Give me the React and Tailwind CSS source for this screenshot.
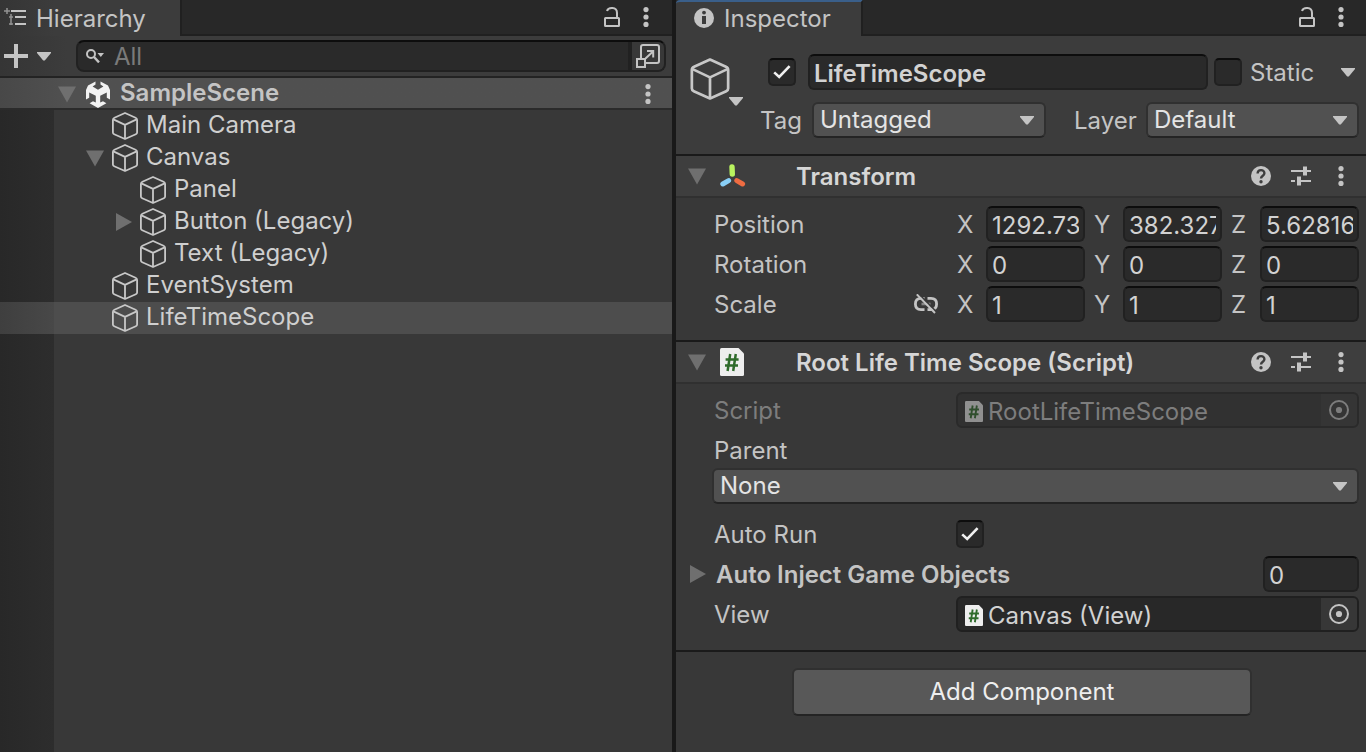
import React from 'react';

const FIELD =
  'h-9 min-w-0 rounded-md border-2 border-[#212121] border-t-[#0d0d0d] bg-[#2a2a2a] px-1 pt-0.5 text-[#d2d2d2] outline-none';

function Cube({ className }) {
  return (
    <svg viewBox="0 0 26 28" className={className} fill="none" stroke="#c8c8c8" strokeWidth="1.8" strokeLinejoin="round">
      <path d="M13 1 L23.6 5.8 Q25.1 6.5 25.1 8 V20.4 Q25.1 21.6 23.8 22.2 L13 27 L2.2 22.2 Q0.9 21.6 0.9 20.4 V8 Q0.9 6.5 2.4 5.8 Z" />
      <path d="M1.4 7.4 L13 12.9 L24.6 7.4 M13 12.9 V27" />
    </svg>
  );
}

function SceneIcon({ className }) {
  return (
    <svg viewBox="0 0 24 27" className={className}>
      <path d="M9.5 0.4 V3.6 L6.6 5.6 L12 8.8 L17.4 5.6 L14.5 3.6 V0.4 L22 4.6 L24 9 V18.4 L20.8 16.8 V11.4 L14.2 14.8 V21.6 L17 20.2 L20.4 22.2 L12 27 L3.6 22.2 L7 20.2 L9.8 21.6 V14.8 L3.2 11.4 V16.8 L0 18.4 V9 L2 4.6 Z" fill="#f2f2f2" />
    </svg>
  );
}

function Triangle({ open, className = '' }) {
  return (
    <svg viewBox="0 0 18 18" className={`h-[18px] w-[18px] shrink-0 ${className}`} fill="#6f6f6f">
      {open ? <path d="M0 1.5 H18 L9 17.5 Z" /> : <path d="M2 0 V18 L18 9 Z" />}
    </svg>
  );
}

function Caret({ className = '' }) {
  return (
    <svg viewBox="0 0 14 9" className={`h-[9px] w-[14px] shrink-0 ${className}`} fill="#c4c4c4">
      <path d="M0 0 H14 V1 L7.8 8.6 H6.2 L0 1 Z" />
    </svg>
  );
}

function Kebab() {
  return (
    <button type="button" aria-label="More options" className="flex h-6 w-6 shrink-0 items-center justify-center">
      <svg viewBox="0 0 6 20" className="h-5 w-[6px]" fill="#c4c4c4">
        <circle cx="3" cy="2.6" r="2.6" />
        <circle cx="3" cy="10" r="2.6" />
        <circle cx="3" cy="17.4" r="2.6" />
      </svg>
    </button>
  );
}

function Lock() {
  return (
    <button type="button" aria-label="Lock" className="flex h-6 w-6 shrink-0 items-center justify-center">
      <svg viewBox="0 0 16 20" className="h-5 w-4" fill="none" stroke="#c4c4c4" strokeWidth="2">
        <rect x="1" y="11" width="14" height="8" rx="0.5" />
        <path d="M3 4 C4.2 0.2 13 -0.6 13 6 V11" />
      </svg>
    </button>
  );
}

function Check({ id, label, checked }) {
  return (
    <span className="grid h-7 w-7 shrink-0 place-items-center">
      <input
        id={id}
        type="checkbox"
        aria-label={label}
        defaultChecked={checked}
        className="peer col-start-1 row-start-1 h-7 w-7 appearance-none rounded-[5px] border-2 border-[#212121] border-t-[#0d0d0d] bg-[#2a2a2a]"
      />
      <svg viewBox="0 0 18 14" className="pointer-events-none col-start-1 row-start-1 hidden h-[14px] w-[18px] peer-checked:block" fill="none" stroke="#f0f0f0" strokeWidth="2.6">
        <path d="M1.2 7.4 L6.2 12 L16.6 1.2" />
      </svg>
    </span>
  );
}

function Dropdown({ id, value, label, className = '' }) {
  return (
    <span className={`grid min-w-0 items-center ${className}`}>
      <select
        id={id}
        aria-label={label}
        className="col-start-1 row-start-1 h-9 w-full appearance-none rounded-md border-2 border-[#303030] border-b-[#242424] bg-[#515151] px-1.5 text-[#e4e4e4] outline-none"
      >
        <option>{value}</option>
      </select>
      <Caret className="pointer-events-none col-start-1 row-start-1 mr-3 justify-self-end" />
    </span>
  );
}

function ScriptIcon({ className }) {
  return (
    <svg viewBox="0 0 24 28" className={className}>
      <path d="M1.5 0 H18.5 L24 5.5 V26.5 Q24 28 22.5 28 H1.5 Q0 28 0 26.5 V1.5 Q0 0 1.5 0 Z" fill="#eeeeee" />
      <path d="M10.2 6 L7.6 23 M15.8 6 L13.2 23 M5.6 11.4 H18.6 M5 17.6 H18" stroke="#2f6b2b" strokeWidth="2.5" fill="none" />
    </svg>
  );
}

function HierarchyItem({ name, child, arrow, selected }) {
  return (
    <li className={`flex h-8 ${selected ? 'bg-[#4d4d4d]' : ''}`}>
      <div className={`w-[54px] shrink-0 bg-linear-to-r ${selected ? 'from-[#3f3f3f] to-[#484848]' : 'from-[#282828] to-[#2d2d2d]'}`} />
      <div className={`flex items-center ${child ? 'pl-[60px]' : 'pl-8'}`}>
        <span className="flex w-[26px] shrink-0">{arrow && <Triangle open={arrow === 'open'} />}</span>
        <Cube className="h-7 w-[26px] shrink-0" />
        <span className="pb-0.5 pl-2">{name}</span>
      </div>
    </li>
  );
}

function Hierarchy() {
  return (
    <section className="flex min-w-0 flex-col bg-[#383838]">
      <div className="flex h-9 bg-[#282828]">
        <div className="flex w-[182px] items-center gap-[9px] border-r-2 border-[#202020] bg-linear-to-r from-[#353535] to-[#3c3c3c] to-30% pt-0.5 pl-1">
          <svg viewBox="0 0 23 18" className="mb-1 h-[18px] w-[23px] shrink-0" stroke="#c4c4c4" strokeWidth="2" fill="none">
            <path d="M7 3 H22 M11 9 H22 M11 16 H22" />
            <path d="M3 0 V6 M0 3 H6 M7 6 V17 M5 9 H9 M5 16 H9" strokeWidth="1.5" opacity="0.65" />
          </svg>
          <h2>Hierarchy</h2>
        </div>
        <div className="flex flex-1 items-center justify-end gap-[10px] border-b-2 border-[#202020] pr-[14px]">
          <Lock />
          <Kebab />
        </div>
      </div>
      <div className="flex h-[42px] items-center border-b-2 border-[#232323] bg-linear-to-r from-[#353535] to-[#3c3c3c] to-10% pr-[6px] pl-1">
        <button type="button" aria-label="Create" className="flex h-6 w-[47px] shrink-0 items-center justify-between">
          <svg viewBox="0 0 24 24" className="h-6 w-6" stroke="#c4c4c4" strokeWidth="4">
            <path d="M12 0 V24 M0 12 H24" />
          </svg>
          <Caret />
        </button>
        <div className="ml-[25px] flex h-8 flex-1 items-center rounded-lg border-2 border-[#212121] border-t-[#0d0d0d] bg-[#2a2a2a]">
          <svg viewBox="0 0 18 14" className="ml-2 h-[14px] w-[18px] shrink-0" fill="none" stroke="#c4c4c4" strokeWidth="2">
            <circle cx="5" cy="5" r="4" />
            <path d="M8 8 L13 13.4" strokeWidth="2.4" />
            <path d="M11.5 4 H18 L14.8 8 Z" fill="#c4c4c4" stroke="none" />
          </svg>
          <input type="text" aria-label="Search hierarchy" placeholder="All" className="h-7 min-w-0 flex-1 bg-transparent px-[10px] pt-0.5 outline-none placeholder:text-[#7a7a7a]" />
          <button type="button" aria-label="Open search window" className="flex h-7 w-9 shrink-0 items-center justify-center rounded-r-md border-l-4 border-[#212121] bg-[#383838]">
            <svg viewBox="0 0 24 24" className="h-6 w-6" fill="none" stroke="#c4c4c4" strokeWidth="2">
              <path d="M5 14 V3 Q5 1 7 1 H21 Q23 1 23 3 V17 Q23 19 21 19 H10" />
              <rect x="1" y="15" width="8" height="8" />
              <path d="M9.5 14.5 L17 7.5 M11 7 H17.2 V13.5" />
            </svg>
          </button>
        </div>
      </div>
      <div className="flex h-8 items-center border-b-2 border-[#2b2b2b] bg-linear-to-r from-[#484848] to-[#505050] to-10% pt-0.5 pr-3 pl-[58px]">
        <Triangle open />
        <SceneIcon className="ml-[10px] h-[27px] w-6 shrink-0" />
        <h3 className="flex-1 pb-0.5 pl-[10px] font-semibold">SampleScene</h3>
        <Kebab />
      </div>
      <ul className="text-[#cfcfcf]">
        <HierarchyItem name="Main Camera" />
        <HierarchyItem name="Canvas" arrow="open" />
        <HierarchyItem name="Panel" child />
        <HierarchyItem name="Button (Legacy)" child arrow="closed" />
        <HierarchyItem name="Text (Legacy)" child />
        <HierarchyItem name="EventSystem" />
        <HierarchyItem name="LifeTimeScope" selected />
      </ul>
      <div className="w-[54px] flex-1 bg-linear-to-r from-[#282828] to-[#2d2d2d]" />
    </section>
  );
}

function ComponentHeader({ icon, title }) {
  return (
    <div className="flex h-11 items-center border-t-2 border-b-2 border-t-[#1a1a1a] border-b-[#303030] bg-[#3e3e3e] pr-[13px] pl-3">
      <Triangle open />
      <span className="ml-3 flex w-[78px] shrink-0 items-center pl-0.5">{icon}</span>
      <h3 className="flex-1 pt-0.5 font-semibold text-[#d6d6d6]">{title}</h3>
      <div className="flex items-center gap-4">
        <button type="button" aria-label="Help" className="flex h-6 w-6 items-center justify-center">
          <svg viewBox="0 0 20 20" className="h-5 w-5">
            <circle cx="10" cy="10" r="10" fill="#c4c4c4" />
            <path d="M6.6 7.6 C6.6 3 13.4 3 13.4 7.2 C13.4 9.8 10 9.6 10 12.6" fill="none" stroke="#3e3e3e" strokeWidth="2.4" />
            <circle cx="10" cy="15.8" r="1.7" fill="#3e3e3e" />
          </svg>
        </button>
        <button type="button" aria-label="Presets" className="flex h-6 w-6 items-center justify-center">
          <svg viewBox="0 0 20 20" className="h-5 w-5" stroke="#c4c4c4" fill="none">
            <path d="M0 5 H12 M16 5 H20 M0 15 H4 M8 15 H20" strokeWidth="2" />
            <path d="M14 0.5 V9.5 M8 10.5 V19.5" strokeWidth="4" />
          </svg>
        </button>
        <Kebab />
      </div>
    </div>
  );
}

function VectorRow({ label, values, linked }) {
  const axes = ['X', 'Y', 'Z'];
  return (
    <div className="flex h-9 items-center pl-[38px]">
      <div className="flex w-[242px] shrink-0 items-center justify-between pr-[18px]">
        <span className="pt-0.5">{label}</span>
        {linked && (
          <button type="button" aria-label="Constrain proportions">
            <svg viewBox="0 0 24 20" className="h-5 w-6" fill="none" stroke="#c4c4c4" strokeWidth="2.8">
              <path d="M10.5 4.4 H7 Q1.4 4.4 1.4 10 Q1.4 15.6 7 15.6 H10.5 M13.5 4.4 H17 Q22.6 4.4 22.6 10 Q22.6 15.6 17 15.6 H13.5" />
              <path d="M7.5 10 H16.5" strokeWidth="2.6" opacity="0.55" />
              <path d="M4.6 -0.4 L22.8 18.2" stroke="#383838" strokeWidth="1.6" />
              <path d="M2.8 0.4 L21 19" strokeWidth="2" />
            </svg>
          </button>
        )}
      </div>
      <div className="grid flex-1 grid-cols-3 gap-2">
        {axes.map((axis, i) => (
          <label key={axis} className="flex items-center">
            <span className="w-[30px] shrink-0 pt-0.5 pl-px">{axis}</span>
            <input type="text" defaultValue={values[i]} aria-label={`${label} ${axis}`} className={`${FIELD} w-full flex-1`} />
          </label>
        ))}
      </div>
    </div>
  );
}

function ObjectField({ label, value, disabled }) {
  return (
    <div className={`flex h-9 items-center pl-[38px] ${disabled ? 'text-[#7d7d7d]' : ''}`}>
      <span className="w-[242px] shrink-0 pt-0.5">{label}</span>
      <div className={`flex h-9 min-w-0 flex-1 items-center rounded-md border-2 pl-[7px] ${disabled ? 'border-[#2a2a2a] bg-[#313131]' : 'border-[#202020] bg-[#282828] text-[#d2d2d2]'}`}>
        <ScriptIcon className={`mt-0.5 h-[21px] w-[18px] shrink-0 ${disabled ? 'opacity-50' : ''}`} />
        <span className="flex-1 pt-1 pl-[5px]">{value}</span>
        <button type="button" disabled={disabled} aria-label={`Select ${label}`} className={`flex h-8 w-9 items-center justify-center rounded-r ${disabled ? 'bg-[#353535]' : 'bg-[#373737] text-[#c4c4c4]'}`}>
          <svg viewBox="0 0 20 20" className="h-5 w-5">
            <circle cx="10" cy="10" r="9" fill="none" stroke="currentColor" strokeWidth="2" />
            <circle cx="10" cy="10" r="3.1" fill="currentColor" />
          </svg>
        </button>
      </div>
    </div>
  );
}

function Inspector() {
  return (
    <section className="flex min-w-0 flex-col bg-[#383838]">
      <div className="flex h-9 bg-[#282828]">
        <div className="flex w-[187px] items-center gap-[10px] rounded-tl-sm border-t-2 border-r-2 border-t-[#3a5f8a] border-r-[#202020] bg-[#3c3c3c] pl-[18px]">
          <svg viewBox="0 0 20 20" className="mb-0.5 h-5 w-5 shrink-0">
            <circle cx="10" cy="10" r="10" fill="#c4c4c4" />
            <circle cx="10" cy="4.6" r="1.9" fill="#3c3c3c" />
            <path d="M8 8 H12 V16 H8 Z" fill="#3c3c3c" />
          </svg>
          <h2>Inspector</h2>
        </div>
        <div className="flex flex-1 items-center justify-end gap-[10px] border-b-2 border-[#202020] pr-[13px]">
          <Lock />
          <Kebab />
        </div>
      </div>

      <div className="flex h-[118px] bg-[#3c3c3c] pt-[18px] pr-[7px] pl-[14px]">
        <button type="button" aria-label="Object icon" className="flex h-[52px] w-[54px] shrink-0 items-end">
          <Cube className="mb-1.5 h-[42px] w-10" />
          <Caret className="-ml-px" />
        </button>
        <div className="flex flex-1 flex-col gap-3">
          <div className="flex items-center pl-6">
            <Check label="Active" checked />
            <input type="text" aria-label="Name" defaultValue="LifeTimeScope" className={`${FIELD} ml-3 flex-1 font-semibold`} />
            <span className="ml-[6px] flex">
              <Check id="static" />
            </span>
            <label htmlFor="static" className="w-[99px] shrink-0 pt-0.5 pl-2">
              Static
            </label>
            <Caret className="mr-1" />
          </div>
          <div className="flex items-center pl-4">
            <label htmlFor="tag" className="w-[52px] shrink-0 pt-0.5">
              Tag
            </label>
            <Dropdown id="tag" value="Untagged" className="flex-[234]" />
            <label htmlFor="layer" className="w-[100px] shrink-0 pt-0.5 pl-7">
              Layer
            </label>
            <Dropdown id="layer" value="Default" className="flex-[213]" />
          </div>
        </div>
      </div>

      <ComponentHeader
        title="Transform"
        icon={
          <svg viewBox="0 0 26 24" className="h-6 w-[26px]" strokeLinecap="round" fill="none">
            <path d="M12 3 L12.3 10" stroke="#b9f35f" strokeWidth="5.4" />
            <path d="M8.6 16.6 L2.8 20" stroke="#8ad0f7" strokeWidth="5" />
            <path d="M16.8 16.6 L22.6 20" stroke="#ee6c42" strokeWidth="5" />
          </svg>
        }
      />
      <div className="flex flex-col gap-1 pt-2 pr-[7px] pb-[18px]">
        <VectorRow label="Position" values={['1292.73', '382.32763', '5.62816']} />
        <VectorRow label="Rotation" values={['0', '0', '0']} />
        <VectorRow label="Scale" values={['1', '1', '1']} linked />
      </div>

      <ComponentHeader title="Root Life Time Scope (Script)" icon={<ScriptIcon className="h-7 w-6" />} />
      <div className="flex flex-col gap-1 pt-2 pr-[7px] pb-[18px]">
        <ObjectField label="Script" value="RootLifeTimeScope" disabled />
        <div className="mb-2 pl-9">
          <label htmlFor="parent" className="flex h-9 items-center pt-0.5 pl-0.5">
            Parent
          </label>
          <Dropdown id="parent" value="None" />
        </div>
        <div className="flex h-9 items-center pl-[38px]">
          <label htmlFor="auto-run" className="w-[242px] shrink-0 pt-0.5">
            Auto Run
          </label>
          <Check id="auto-run" checked />
        </div>
        <div className="flex h-9 items-center pl-3">
          <Triangle />
          <label htmlFor="inject-count" className="flex-1 pt-0.5 pl-[10px] font-semibold">
            Auto Inject Game Objects
          </label>
          <input id="inject-count" type="text" defaultValue="0" className={`${FIELD} w-24`} />
        </div>
        <ObjectField label="View" value="Canvas (View)" />
      </div>

      <div className="flex flex-1 items-start justify-center border-t-2 border-[#1a1a1a] pt-4 pl-0.5">
        <button type="button" className="h-12 w-[460px] rounded-md border-2 border-[#303030] border-b-[#242424] bg-[#585858] text-[#eeeeee]">
          Add Component
        </button>
      </div>
    </section>
  );
}

export default function App() {
  return (
    <main className="grid min-h-screen grid-cols-[672fr_690fr] gap-1 bg-[#191919] font-['Inter',sans-serif] text-2xl leading-8 whitespace-nowrap text-[#c4c4c4]">
      <Hierarchy />
      <Inspector />
    </main>
  );
}
